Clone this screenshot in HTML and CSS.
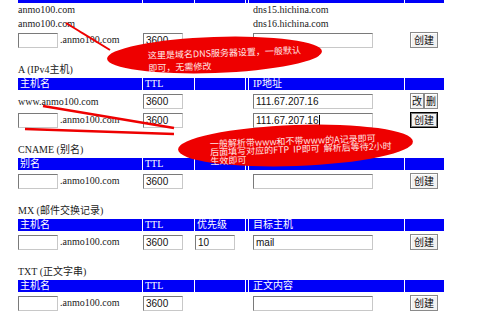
FILE: index.html
```html
<!DOCTYPE html>
<html lang="en">
<head>
    <meta charset="UTF-8">
    <title>域名解析</title>
    <link rel="stylesheet" href="styles.css">
</head>
<body>
<div class="page">
    <!-- NS 记录（上半部分被截掉） -->
    <table class="grid">
        <colgroup><col class="c1"><col class="c2"><col class="c3"><col class="c4"><col class="c5"><col class="c6"></colgroup>
        <tr class="strip"><th></th><th></th><th></th><th></th><th></th><th></th></tr>
        <tr class="txtrow first"><td colspan="4">anmo100.com</td><td class="pl">dns15.hichina.com</td><td></td></tr>
        <tr class="txtrow"><td colspan="4">anmo100.com</td><td class="pl">dns16.hichina.com</td><td></td></tr>
        <tr class="row ns"><td><input class="host" type="text">.anmo100.com</td><td><input class="ttl" type="text" value="3600"></td><td></td><td></td><td class="pl"><input class="wide" type="text"></td><td class="pl"><button class="btn">创建</button></td></tr>
    </table>

    <div class="title">A (IPv4主机)</div>
    <table class="grid">
        <colgroup><col class="c1"><col class="c2"><col class="c3"><col class="c4"><col class="c5"><col class="c6"></colgroup>
        <tr class="head"><th>主机名</th><th>TTL</th><th></th><th></th><th class="pl">IP地址</th><th></th></tr>
        <tr class="row"><td>www.anmo100.com</td><td><input class="ttl" type="text" value="3600"></td><td></td><td></td><td class="pl"><input class="wide" type="text" value="111.67.207.16"></td><td class="pl"><button class="btn half">改</button><button class="btn half">删</button></td></tr>
        <tr class="row"><td><input class="host" type="text">.anmo100.com</td><td><input class="ttl" type="text" value="3600"></td><td></td><td></td><td class="pl"><span class="caretbox"><input class="wide" type="text" value="111.67.207.16"><i class="caret"></i></span></td><td class="pl"><button class="btn on">创建</button></td></tr>
    </table>

    <div class="title">CNAME (别名)</div>
    <table class="grid">
        <colgroup><col class="c1"><col class="c2"><col class="c3"><col class="c4"><col class="c5"><col class="c6"></colgroup>
        <tr class="head"><th>别名</th><th>TTL</th><th></th><th></th><th class="pl"></th><th></th></tr>
        <tr class="row"><td><input class="host" type="text">.anmo100.com</td><td><input class="ttl" type="text" value="3600"></td><td></td><td></td><td class="pl"><input class="wide" type="text"></td><td class="pl"><button class="btn">创建</button></td></tr>
    </table>

    <div class="title">MX (邮件交换记录)</div>
    <table class="grid">
        <colgroup><col class="c1"><col class="c2"><col class="c3"><col class="c4"><col class="c5"><col class="c6"></colgroup>
        <tr class="head"><th>主机名</th><th>TTL</th><th>优先级</th><th></th><th class="pl">目标主机</th><th></th></tr>
        <tr class="row"><td><input class="host" type="text">.anmo100.com</td><td><input class="ttl" type="text" value="3600"></td><td><input class="ttl" type="text" value="10"></td><td></td><td class="pl"><input class="wide" type="text" value="mail"></td><td class="pl"><button class="btn">创建</button></td></tr>
    </table>

    <div class="title">TXT (正文字串)</div>
    <table class="grid">
        <colgroup><col class="c1"><col class="c2"><col class="c3"><col class="c4"><col class="c5"><col class="c6"></colgroup>
        <tr class="head"><th>主机名</th><th>TTL</th><th></th><th></th><th class="pl">正文内容</th><th></th></tr>
        <tr class="row"><td><input class="host" type="text">.anmo100.com</td><td><input class="ttl" type="text" value="3600"></td><td></td><td></td><td class="pl"><input class="wide" type="text"></td><td class="pl"><button class="btn">创建</button></td></tr>
    </table>

    <!-- 红色批注 -->
    <svg class="marks" width="480" height="320" viewBox="0 0 480 320">
        <line x1="66" y1="23" x2="110" y2="50" stroke="#e00" stroke-width="2"/>
        <line x1="43" y1="106" x2="174" y2="128" stroke="#e00" stroke-width="2.5"/>
        <line x1="25" y1="129" x2="174" y2="134" stroke="#e00" stroke-width="2.5"/>
    </svg>
    <div class="note note1"><span class="small">这里是域名DNS服务器设置，一般默认<br>即可，无需修改</span></div>
    <div class="note note2"><span class="small">一般解析带www和不带www的A记录即可<br>后面填写对应的FTP&nbsp; IP即可&nbsp; 解析后等待2小时<br>生效即可</span></div>
</div>
</body>
</html>
```

FILE: styles.css
```css
*{
    margin:0;
    padding:0;
    box-sizing:border-box;
}
body{
    background:#fff;
    font-family:"Liberation Serif","Noto Sans CJK SC",serif;
    font-size:10px;
    color:#222;
}
.page{
    width:480px;
    height:320px;
    position:relative;
    overflow:hidden;
}
.grid{
    margin-left:17px;
    width:428px;
    table-layout:fixed;
    border-collapse:separate;
    border-spacing:1px 0;
}
.c1{width:124px;}
.c2{width:51px;}
.c3{width:50px;}
.c4{width:2px;}
.c5{width:155px;}
.c6{width:39px;}
.grid th{
    background:#0000f8;
    color:#fff;
    font-weight:normal;
    text-align:left;
    padding:0 0 0 2px;
    white-space:nowrap;
    overflow:hidden;
}
.grid th.pl{padding-left:4px;}
.grid td{
    padding:0;
    white-space:nowrap;
    vertical-align:middle;
}
.grid td.pl{padding-left:4px;}
.grid td.pl .btn{margin-left:1px;}
.strip th{height:3px;}
.head th{
    height:12px;
    line-height:12px;
}
.txtrow td{
    height:14px;
    line-height:14px;
}
.txtrow.first td{height:13px;}
.row td{
    height:19px;
    padding-top:3px;
}
.row.ns td{
    height:17px;
    padding-top:1px;
}
.title{
    margin-top:15px;
    height:14px;
    line-height:14px;
    margin-bottom:1px;
    padding-left:18px;
}
input{
    height:15px;
    border:1px solid;
    border-color:#7a7a7a #c8c8c8 #c8c8c8 #7a7a7a;
    font-family:"Liberation Sans",Arial,sans-serif;
    font-size:10px;
    color:#111;
    padding:0 2px;
    vertical-align:middle;
    outline:none;
    background:#fff;
}
.host{width:40px;margin-right:2px;}
.ttl{width:40px;}
.wide{width:120px;}
.caretbox{
    position:relative;
    display:inline-block;
    vertical-align:middle;
}
.caret{
    position:absolute;
    left:66px;
    top:2px;
    width:1px;
    height:11px;
    background:#000;
}
.btn{
    height:16px;
    width:28px;
    font-family:"Noto Sans CJK SC",sans-serif;
    font-size:10px;
    line-height:14px;
    color:#111;
    background:#f2f2f2;
    border:1px solid #8a8a8a;
    box-shadow:inset 1px 1px #fff;
    vertical-align:middle;
    text-align:center;
}
.btn.half{width:14px;}
.grid td.pl .btn.half + .btn.half{margin-left:0;}
.btn.on{
    border:1px solid #000;
    box-shadow:inset 0 0 0 1px #777;
}
.marks{
    position:absolute;
    left:0;
    top:0;
}
.note{
    position:absolute;
    background:#ee0000;
    border-radius:50%;
    color:#ffe6e6;
    font-family:"Noto Sans CJK SC",sans-serif;
    white-space:nowrap;
}
/* 9px以下的字会被放大，用缩放来做小字 */
.note .small{
    display:inline-block;
    font-size:12px;
    transform:scale(.75);
    transform-origin:0 0;
}
.note1{
    left:107px;
    top:37px;
    width:215px;
    height:36px;
    padding:9px 0 0 41px;
    transform:rotate(-2deg);
}
.note1 .small{line-height:17.33px;}
.note2{
    left:178px;
    top:125px;
    width:235px;
    height:41px;
    padding:11px 0 0 32px;
    transform:rotate(-2deg);
}
.note2 .small{line-height:11.33px;}
```
